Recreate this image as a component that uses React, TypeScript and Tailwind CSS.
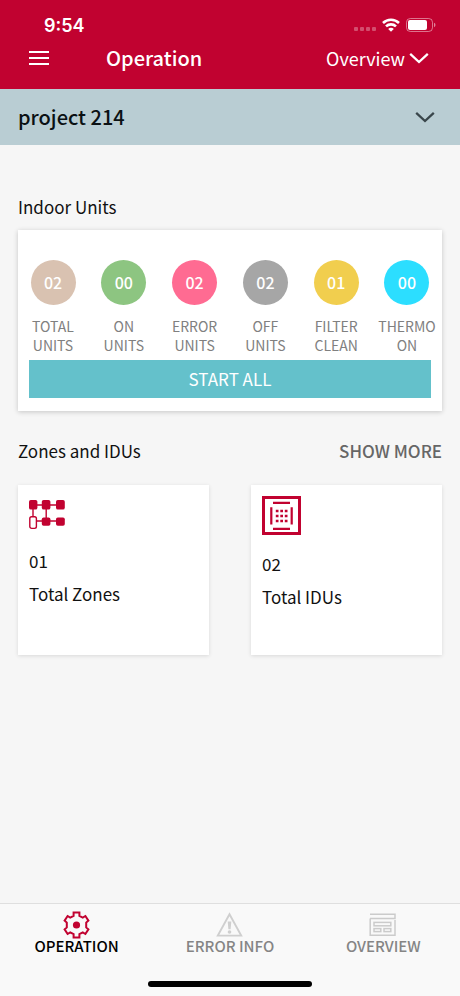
import React, { useState } from 'react';
import clsx from 'clsx';

type Tab = 'operation' | 'error' | 'overview';

interface UnitStat {
  value: string;
  label: string;
  color: string;
}

const UNIT_STATS: UnitStat[] = [
  { value: '02', label: 'TOTAL UNITS', color: 'bg-[#d9c2b1]' },
  { value: '00', label: 'ON UNITS', color: 'bg-[#8dc581]' },
  { value: '02', label: 'ERROR UNITS', color: 'bg-[#ff6b92]' },
  { value: '02', label: 'OFF UNITS', color: 'bg-[#a6a6a6]' },
  { value: '01', label: 'FILTER CLEAN', color: 'bg-[#f1ce4e]' },
  { value: '00', label: 'THERMO ON', color: 'bg-[#2cdeff]' },
];

const ChevronIcon = ({ className }: { className?: string }) => (
  <svg width="20" height="12" viewBox="0 0 20 12" fill="none" className={className} aria-hidden="true">
    <path d="M1.2 1.8 L10 10 L18.8 1.8" stroke="currentColor" strokeWidth="2.3" />
  </svg>
);

const WifiIcon = () => (
  <svg width="18" height="14" viewBox="0 0 18 14" fill="none" stroke="white" strokeWidth="2.6" aria-hidden="true">
    <path d="M1 5 A11.5 11.5 0 0 1 17 5" />
    <path d="M4 8.4 A7.2 7.2 0 0 1 14 8.4" />
    <path d="M9 13.8 L6.2 11 A3.9 3.9 0 0 1 11.8 11 Z" fill="white" stroke="none" />
  </svg>
);

const BatteryIcon = () => (
  <svg width="30" height="14" viewBox="0 0 30 14" fill="none" aria-hidden="true">
    <rect x="0.5" y="0.5" width="26" height="13" rx="3.8" stroke="white" strokeOpacity="0.45" />
    <rect x="2" y="2" width="19" height="10" rx="2" fill="white" />
    <path d="M28 4.8 Q29.5 5.4 29.5 7 Q29.5 8.6 28 9.2 Z" fill="white" fillOpacity="0.5" />
  </svg>
);

const ZonesIcon = () => (
  <svg width="36" height="36" viewBox="0 0 36 36" fill="#c10230" aria-hidden="true">
    <path d="M4 9 H32 M4 9 V22 M17.2 9 V25 M4 25 H32" stroke="#c10230" strokeWidth="1.4" fill="none" />
    <rect x="0" y="4" width="8.4" height="9.6" rx="1.8" />
    <rect x="12.8" y="4" width="8.6" height="9.6" rx="1.8" />
    <rect x="27" y="4" width="8.8" height="9.6" rx="1.8" />
    <rect x="12.8" y="21.4" width="8.6" height="8.4" rx="1.8" />
    <rect x="27" y="21.4" width="8.8" height="8.4" rx="1.8" />
    <rect x="0.8" y="20.8" width="6.6" height="11.6" rx="1.8" fill="white" stroke="#c10230" strokeWidth="1.4" />
  </svg>
);

const IduIcon = () => (
  <svg width="39" height="39" viewBox="0 0 39 39" fill="none" stroke="#c10230" aria-hidden="true">
    <rect x="1.5" y="1.5" width="36" height="36" strokeWidth="3" />
    <path d="M11 6.8 H28 M11 32.8 H28 M9.3 11.2 V28.5 M29.7 11.2 V28.5" strokeWidth="2.2" />
    <path d="M13.8 15 H25.6 M13.8 20 H25.6 M13.8 25 H25.6" strokeWidth="2.5" strokeDasharray="2.7 1.8" />
  </svg>
);

const GearIcon = () => (
  <svg width="28" height="28" viewBox="0 0 28 28" fill="none" aria-hidden="true">
    <path
      d="M10.6 1.6 H16.4 V4.8 L19.8 6.6 L22.4 5 L25.4 9.6 L23.2 11.6 V16.4 L25.4 18.4 L22.4 23 L19.8 21.4 L16.4 23.2 V26.4 H10.6 V23.2 L7.2 21.4 L4.6 23 L1.6 18.4 L3.8 16.4 V11.6 L1.6 9.6 L4.6 5 L7.2 6.6 L10.6 4.8 Z"
      stroke="#c10230"
      strokeWidth="2"
    />
    <circle cx="13.5" cy="14" r="3.6" fill="#c10230" />
  </svg>
);

const WarningIcon = () => (
  <svg width="28" height="28" viewBox="0 0 28 28" fill="none" stroke="#cfcfcf" aria-hidden="true">
    <path d="M13.5 3.2 L25.2 24.6 H1.8 Z" strokeWidth="1.9" />
    <path d="M11.7 10.5 H15.3 L14.6 18.2 H12.4 Z" fill="#cfcfcf" stroke="none" />
    <circle cx="13.5" cy="21" r="1.8" fill="#cfcfcf" stroke="none" />
  </svg>
);

const OverviewIcon = () => (
  <svg width="28" height="28" viewBox="0 0 28 28" fill="none" stroke="#cbcbcb" strokeWidth="1.5" aria-hidden="true">
    <path d="M1 3.2 H26 V7.4 H1" />
    <path d="M1.2 7.4 V24.2 H26 V9" />
    <rect x="5" y="11.4" width="16.8" height="3.4" />
    <rect x="5" y="17.6" width="6.8" height="3" />
    <rect x="15" y="17.6" width="6.8" height="3" />
  </svg>
);

const StatusBar = () => (
  <div className="flex h-9 items-end justify-between pr-6 pl-11 text-white">
    <span className="font-['Inter',sans-serif] text-lg leading-5 font-semibold">9:54</span>
    <div className="flex items-center gap-1.5 pb-1">
      <div className="flex gap-0.5 pt-2">
        {[0, 1, 2, 3].map((dot) => (
          <span key={dot} className="size-1 rounded-[1px] bg-white/30" />
        ))}
      </div>
      <WifiIcon />
      <BatteryIcon />
    </div>
  </div>
);

const UnitBadge = ({ value, label, color }: UnitStat) => (
  <li className="flex flex-col items-center">
    <span className={clsx('flex size-[45px] items-center justify-center rounded-full pb-0.5 text-base font-medium text-white', color)}>
      {value}
    </span>
    <span className="mt-3 w-12 text-center text-sm leading-[19px] text-[#808080]">
      <span className="flex justify-center">{label.split(' ')[0]}</span>
      <span className="flex justify-center">{label.split(' ')[1]}</span>
    </span>
  </li>
);

const SummaryCard = ({ icon, value, label }: { icon: React.ReactNode; value: string; label: string }) => (
  <article className="h-[170px] bg-white p-[11px] text-[17px] leading-[33px] text-[#111] shadow-[0_1px_4px_rgba(0,0,0,0.12)]">
    {icon}
    <p className="mt-3">{value}</p>
    <p>{label}</p>
  </article>
);

export default function App() {
  const [activeTab, setActiveTab] = useState<Tab>('operation');

  const NavItem = ({ tab, icon, label }: { tab: Tab; icon: React.ReactNode; label: string }) => (
    <button
      type="button"
      onClick={() => setActiveTab(tab)}
      className={clsx(
        'flex flex-col items-center text-[15px] leading-[14px] font-medium',
        activeTab === tab ? 'text-black' : 'text-[#858585]'
      )}
    >
      {icon}
      <span>{label}</span>
    </button>
  );

  return (
    <div className="flex min-h-screen flex-col bg-[#f6f6f6] font-['Noto_Sans_CJK_SC',sans-serif]">
      {/* Header */}
      <header className="bg-[#c10230] text-white">
        <StatusBar />
        <div className="flex h-[53px] items-center pr-[31px] pb-[9px] pl-[29px]">
          <button type="button" aria-label="Menu" className="flex w-5 flex-col gap-1">
            <span className="h-0.5 w-full bg-white" />
            <span className="h-0.5 w-full bg-white" />
            <span className="h-0.5 w-full bg-white" />
          </button>
          <h1 className="ml-[57px] text-xl leading-6 font-medium">Operation</h1>
          <button type="button" className="ml-auto flex items-center gap-1 text-lg leading-6">
            Overview
            <ChevronIcon />
          </button>
        </div>
      </header>

      {/* Project picker */}
      <button type="button" className="flex h-14 items-center justify-between bg-[#b9cdd3] pr-[25px] pl-[18px] text-xl font-medium text-[#0b1113]">
        project 214
        <ChevronIcon className="text-[#39464b]" />
      </button>

      <main className="flex-1 px-[18px] pt-[50px] text-[#111]">
        <h2 className="text-[17px] leading-6">Indoor Units</h2>
        <section className="mt-[11px] bg-white px-[11px] pt-[30px] pb-[13px] shadow-[0_1px_5px_rgba(0,0,0,0.2)]">
          <ul className="flex justify-between">
            {UNIT_STATS.map((stat) => (
              <UnitBadge key={stat.label} {...stat} />
            ))}
          </ul>
          <button type="button" className="mt-[5px] h-[38px] w-full bg-[#64c1cb] text-[17px] text-white">
            START ALL
          </button>
        </section>

        <div className="mt-7 flex items-center justify-between text-[17px] leading-6">
          <h2>Zones and IDUs</h2>
          <button type="button" className="font-medium text-[#666]">SHOW MORE</button>
        </div>
        <div className="mt-[22px] grid grid-cols-2 gap-[42px]">
          <SummaryCard icon={<ZonesIcon />} value="01" label="Total Zones" />
          <SummaryCard icon={<IduIcon />} value="02" label="Total IDUs" />
        </div>
      </main>

      {/* Bottom tabs */}
      <footer className="border-t border-[#dfdfdf] bg-[#f9f9f9]">
        <nav className="grid grid-cols-3 pt-[7px]">
          <NavItem tab="operation" icon={<GearIcon />} label="OPERATION" />
          <NavItem tab="error" icon={<WarningIcon />} label="ERROR INFO" />
          <NavItem tab="overview" icon={<OverviewIcon />} label="OVERVIEW" />
        </nav>
        <div className="mx-auto mt-7 mb-[9px] h-1.5 w-[164px] rounded-full bg-black" />
      </footer>
    </div>
  );
}
